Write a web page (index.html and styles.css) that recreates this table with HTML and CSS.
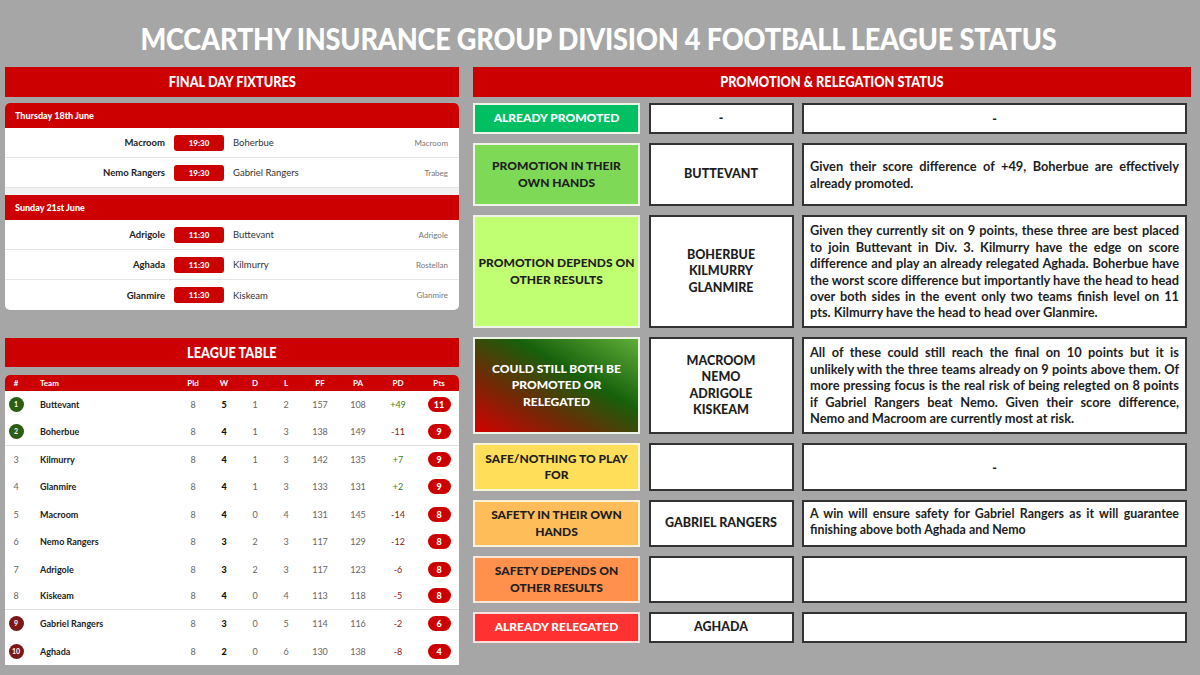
FILE: index.html
```html
<!DOCTYPE html>
<html lang="en">
<head>
<meta charset="utf-8">
<title>McCarthy Insurance Group Division 4 Football League Status</title>
<link rel="stylesheet" href="styles.css">
</head>
<body>
<div class="page">
  <h1 class="title"><span>MCCARTHY INSURANCE GROUP DIVISION 4 FOOTBALL LEAGUE STATUS</span></h1>
  <div class="cols">
    <div class="left">
      <div class="bar"><span>FINAL DAY FIXTURES</span></div>
      <div class="card fixtures">
        <div class="date">Thursday 18th June</div>
        <div class="fx"><span class="home">Macroom</span><span class="time">19:30</span><span class="away">Boherbue</span><span class="venue">Macroom</span></div>
        <div class="fx"><span class="home">Nemo Rangers</span><span class="time">19:30</span><span class="away">Gabriel Rangers</span><span class="venue">Trabeg</span></div>
        <div class="spacer"></div>
        <div class="date">Sunday 21st June</div>
        <div class="fx"><span class="home">Adrigole</span><span class="time">11:30</span><span class="away">Buttevant</span><span class="venue">Adrigole</span></div>
        <div class="fx"><span class="home">Aghada</span><span class="time">11:30</span><span class="away">Kilmurry</span><span class="venue">Rostellan</span></div>
        <div class="fx last"><span class="home">Glanmire</span><span class="time">11:30</span><span class="away">Kiskeam</span><span class="venue">Glanmire</span></div>
      </div>
      <div class="bar bar-table"><span>LEAGUE TABLE</span></div>
      <div class="card table">
        <div class="tr th"><span class="c">#</span><span class="team">Team</span><span class="c">Pld</span><span class="c">W</span><span class="c">D</span><span class="c">L</span><span class="c">PF</span><span class="c">PA</span><span class="c">PD</span><span class="c">Pts</span></div>
        <div class="tr"><span class="c"><i class="pb up">1</i></span><span class="team">Buttevant</span><span class="c">8</span><span class="c w">5</span><span class="c">1</span><span class="c">2</span><span class="c">157</span><span class="c">108</span><span class="c pd plus">+49</span><span class="c"><b class="pts">11</b></span></div>
        <div class="tr sep"><span class="c"><i class="pb up">2</i></span><span class="team">Boherbue</span><span class="c">8</span><span class="c w">4</span><span class="c">1</span><span class="c">3</span><span class="c">138</span><span class="c">149</span><span class="c pd minus">-11</span><span class="c"><b class="pts">9</b></span></div>
        <div class="tr"><span class="c">3</span><span class="team">Kilmurry</span><span class="c">8</span><span class="c w">4</span><span class="c">1</span><span class="c">3</span><span class="c">142</span><span class="c">135</span><span class="c pd plus">+7</span><span class="c"><b class="pts">9</b></span></div>
        <div class="tr"><span class="c">4</span><span class="team">Glanmire</span><span class="c">8</span><span class="c w">4</span><span class="c">1</span><span class="c">3</span><span class="c">133</span><span class="c">131</span><span class="c pd plus">+2</span><span class="c"><b class="pts">9</b></span></div>
        <div class="tr"><span class="c">5</span><span class="team">Macroom</span><span class="c">8</span><span class="c w">4</span><span class="c">0</span><span class="c">4</span><span class="c">131</span><span class="c">145</span><span class="c pd minus">-14</span><span class="c"><b class="pts">8</b></span></div>
        <div class="tr"><span class="c">6</span><span class="team">Nemo Rangers</span><span class="c">8</span><span class="c w">3</span><span class="c">2</span><span class="c">3</span><span class="c">117</span><span class="c">129</span><span class="c pd minus">-12</span><span class="c"><b class="pts">8</b></span></div>
        <div class="tr"><span class="c">7</span><span class="team">Adrigole</span><span class="c">8</span><span class="c w">3</span><span class="c">2</span><span class="c">3</span><span class="c">117</span><span class="c">123</span><span class="c pd minus">-6</span><span class="c"><b class="pts">8</b></span></div>
        <div class="tr sep"><span class="c">8</span><span class="team">Kiskeam</span><span class="c">8</span><span class="c w">4</span><span class="c">0</span><span class="c">4</span><span class="c">113</span><span class="c">118</span><span class="c pd minus">-5</span><span class="c"><b class="pts">8</b></span></div>
        <div class="tr"><span class="c"><i class="pb down">9</i></span><span class="team">Gabriel Rangers</span><span class="c">8</span><span class="c w">3</span><span class="c">0</span><span class="c">5</span><span class="c">114</span><span class="c">116</span><span class="c pd minus">-2</span><span class="c"><b class="pts">6</b></span></div>
        <div class="tr"><span class="c"><i class="pb down">10</i></span><span class="team">Aghada</span><span class="c">8</span><span class="c w">2</span><span class="c">0</span><span class="c">6</span><span class="c">130</span><span class="c">138</span><span class="c pd minus">-8</span><span class="c"><b class="pts">4</b></span></div>
      </div>
    </div>
    <div class="right">
      <div class="bar"><span>PROMOTION &amp; RELEGATION STATUS</span></div>
      <div class="status">
        <div class="lab s1">ALREADY PROMOTED</div>
        <div class="box teams">-</div>
        <div class="box centre">-</div>

        <div class="lab s2">PROMOTION IN THEIR<br>OWN HANDS</div>
        <div class="box teams">BUTTEVANT</div>
        <div class="box desc">Given their score difference of +49, Boherbue are effectively already promoted.</div>

        <div class="lab s3">PROMOTION DEPENDS ON<br>OTHER RESULTS</div>
        <div class="box teams">BOHERBUE<br>KILMURRY<br>GLANMIRE</div>
        <div class="box desc">Given they currently sit on 9 points, these three are best placed to join Buttevant in Div. 3. Kilmurry have the edge on score difference and play an already relegated Aghada. Boherbue have the worst score difference but importantly have the head to head over both sides in the event only two teams finish level on 11 pts. Kilmurry have the head to head over Glanmire.</div>

        <div class="lab s4">COULD STILL BOTH BE<br>PROMOTED OR<br>RELEGATED</div>
        <div class="box teams">MACROOM<br>NEMO<br>ADRIGOLE<br>KISKEAM</div>
        <div class="box desc">All of these could still reach the final on 10 points but it is unlikely with the three teams already on 9 points above them. Of more pressing focus is the real risk of being relegted on 8 points if Gabriel Rangers beat Nemo. Given their score difference, Nemo and Macroom are currently most at risk.</div>

        <div class="lab s5">SAFE/NOTHING TO PLAY<br>FOR</div>
        <div class="box teams"></div>
        <div class="box centre">-</div>

        <div class="lab s6">SAFETY IN THEIR OWN<br>HANDS</div>
        <div class="box teams">GABRIEL RANGERS</div>
        <div class="box desc top tight">A win will ensure safety for Gabriel Rangers as it will guarantee finishing above both Aghada and Nemo</div>

        <div class="lab s7">SAFETY DEPENDS ON<br>OTHER RESULTS</div>
        <div class="box teams"></div>
        <div class="box desc"></div>

        <div class="lab s8">ALREADY RELEGATED</div>
        <div class="box teams">AGHADA</div>
        <div class="box desc"></div>
      </div>
    </div>
  </div>
</div>
</body>
</html>
```

FILE: styles.css
```css
* { box-sizing: border-box; }
html, body { margin: 0; padding: 0; }
body {
  background: #a6a6a6;
  font-family: "Lato", "Open Sans", sans-serif;
  color: #222;
  width: 1200px;
  height: 675px;
  overflow: hidden;
}
.page { padding: 0 9px 0 5px; }

.title {
  margin: 0;
  height: 67px;
  padding-top: 20px;
  text-align: center;
  color: #fff;
  font-size: 31px;
  font-weight: 900;
  line-height: 36px;
  letter-spacing: -0.2px;
}
.title span { display: inline-block; transform: scaleX(0.875); white-space: nowrap; }
.bar span { display: inline-block; transform: scaleX(0.88); white-space: nowrap; }

.cols { display: flex; gap: 14px; }
.left { width: 454px; display: flex; flex-direction: column; }
.right { width: 718px; display: flex; flex-direction: column; }

.bar {
  height: 30px;
  background: #cc0000;
  color: #fff;
  font-weight: 900;
  font-size: 14.5px;
  text-align: center;
  line-height: 30px;
}
.bar-table { margin-top: 28px; height: 29px; line-height: 29px; }

.card { background: #fff; border-radius: 5px; overflow: hidden; }
.fixtures { margin-top: 6px; height: 207px; }
.date {
  height: 25px;
  background: #cc0000;
  color: #fff;
  font-weight: 900;
  font-size: 9px;
  line-height: 25px;
  padding-left: 10px;
}
.fx {
  height: 30px;
  display: grid;
  grid-template-columns: 160px 50px 1fr auto;
  column-gap: 9px;
  align-items: center;
  border-bottom: 1px solid #e4e4e4;
  font-size: 9.5px;
}
.fx.last { border-bottom: 0; }
.spacer { height: 7px; background: #f1f1f1; }
.home { text-align: right; font-weight: 700; color: #222; }
.time {
  height: 16px;
  line-height: 16px;
  background: #cc0000;
  color: #fff;
  border-radius: 3px;
  text-align: center;
  font-weight: 900;
  font-size: 8px;
}
.away { color: #333; }
.venue { color: #777; font-size: 8px; padding-right: 11px; text-align: right; }

.table { margin-top: 8px; border-radius: 5px 5px 0 0; height: 290px; }
.tr {
  height: 27.4px;
  display: grid;
  grid-template-columns: 22px 150px 32px 30px 32px 30px 38px 38px 42px 40px;
  align-items: center;
  font-size: 9px;
  color: #666;
}
.tr.th {
  height: 16px;
  background: #cc0000;
  color: #fff;
  font-weight: 700;
  font-size: 8px;
}
.tr.sep { border-bottom: 1px solid #dcdcdc; }
.c { text-align: center; }
.team { padding-left: 13px; font-weight: 700; color: #222; }
.th .team { color: #fff; }
.w { font-weight: 900; color: #111; }
.pd.plus { color: #3b7d23; }
.pd.minus { color: #8b1a1a; }
.pb {
  display: inline-block;
  width: 15px;
  height: 15px;
  border-radius: 50%;
  line-height: 15px;
  font-style: normal;
  font-weight: 700;
  font-size: 7px;
  color: #fff;
  box-shadow: 0 0 0 1px rgba(255,255,255,0.4);
}
.pb.up { background: #2c5e12; }
.pb.down { background: #7c1717; }
.pts {
  display: inline-block;
  width: 23px;
  height: 15px;
  line-height: 15px;
  border-radius: 8px;
  background: #cc0000;
  color: #fff;
  font-weight: 900;
  font-size: 9px;
}

.status {
  margin-top: 6px;
  display: grid;
  grid-template-columns: 167px 145px 385px;
  grid-template-rows: 31px 63px 113px 97px 48px 47px 47px 31px;
  column-gap: 8.5px;
  row-gap: 9px;
}
.lab {
  border: 2px solid #eef3e8;
  display: flex;
  align-items: center;
  justify-content: center;
  text-align: center;
  font-weight: 900;
  font-size: 12px;
  line-height: 16.5px;
  color: #1e1e1e;
}
.s1 { background: #00bf63; color: #fff; }
.s2 { background: #7ed957; }
.s3 { background: #c1ff72; }
.s4 { background: linear-gradient(to top right, #d40000 0%, #6e2a06 32%, #17600c 62%, #5fae38 100%); color: #fff; }
.s5 { background: #ffde59; border-color: #fff6d8; }
.s6 { background: #ffbd59; border-color: #fff0d8; }
.s7 { background: #ff914d; border-color: #ffe6d6; }
.s8 { background: #ff3131; color: #fff; border-color: #ffdede; }

.box {
  background: #fff;
  border: 2px solid #333;
  font-weight: 900;
  color: #1e1e1e;
}
.teams {
  display: flex;
  align-items: center;
  justify-content: center;
  text-align: center;
  font-size: 12.5px;
  line-height: 16.5px;
}
.centre {
  display: flex;
  align-items: center;
  justify-content: center;
  font-size: 12.5px;
}
.desc {
  display: flex;
  align-items: center;
  padding: 0 6px 0 6px;
  font-size: 12.8px;
  line-height: 16.4px;
  text-align: justify;
  font-weight: 700;
}
.desc.top { align-items: flex-start; padding-top: 4px; }
.desc.tight { font-size: 12.4px; }
```
